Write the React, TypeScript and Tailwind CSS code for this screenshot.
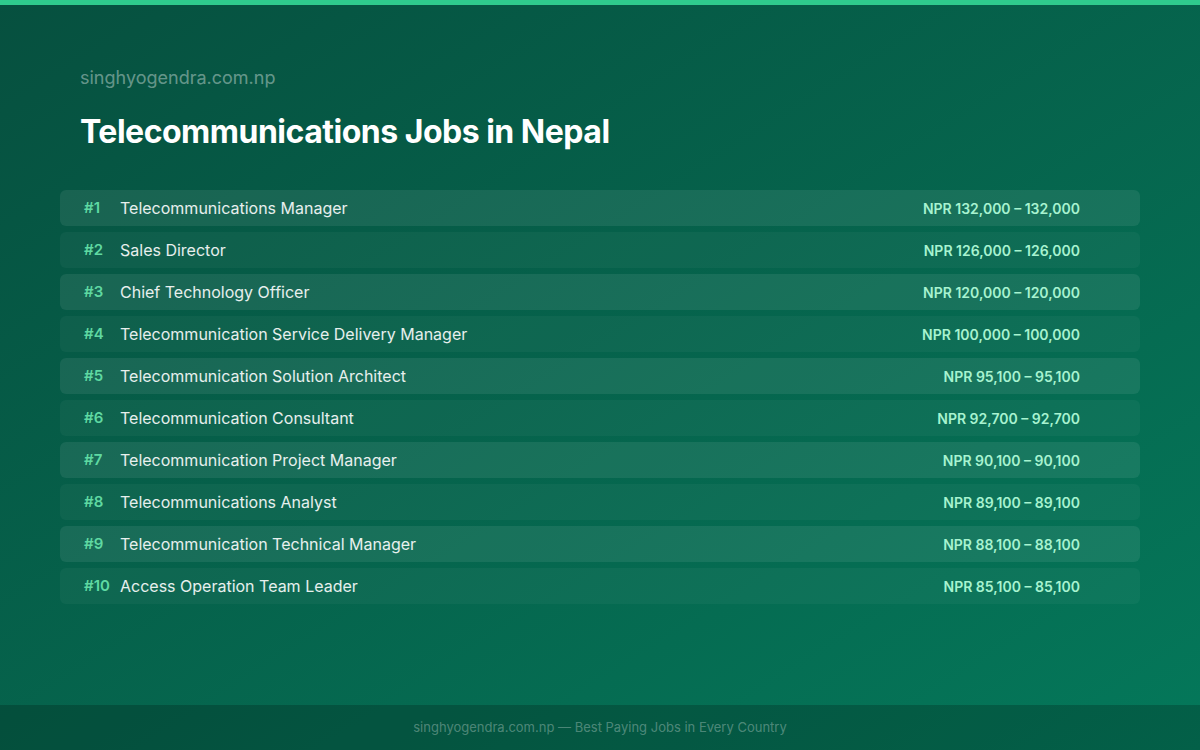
const jobs = [
  ['Telecommunications Manager', 'NPR 132,000 – 132,000'],
  ['Sales Director', 'NPR 126,000 – 126,000'],
  ['Chief Technology Officer', 'NPR 120,000 – 120,000'],
  ['Telecommunication Service Delivery Manager', 'NPR 100,000 – 100,000'],
  ['Telecommunication Solution Architect', 'NPR 95,100 – 95,100'],
  ['Telecommunication Consultant', 'NPR 92,700 – 92,700'],
  ['Telecommunication Project Manager', 'NPR 90,100 – 90,100'],
  ['Telecommunications Analyst', 'NPR 89,100 – 89,100'],
  ['Telecommunication Technical Manager', 'NPR 88,100 – 88,100'],
  ['Access Operation Team Leader', 'NPR 85,100 – 85,100'],
];

export default function App() {
  return (
    <div className="w-[1200px] h-[750px] flex flex-col bg-gradient-to-br from-[#06503f] to-[#04785a] [font-family:Inter,Roboto,sans-serif] overflow-hidden">
      <div className="h-[5px] bg-[#2fcb8d]" />
      <main className="flex-1 flex flex-col px-[60px]">
        <p className="mt-[61px] px-5 text-[18px] leading-[24px] text-white/40">singhyogendra.com.np</p>
        <h1 className="mt-[22px] px-5 text-[32px] leading-[40px] font-bold text-white tracking-[-0.5px]">Telecommunications Jobs in Nepal</h1>
        <div className="mt-[38px] flex flex-col gap-[6px]">
          {jobs.map(([name, pay], i) => (
            <div
              key={name}
              className={
                'h-[36px] rounded-md flex items-center pl-6 pr-[60px] ' +
                (i % 2 === 0 ? 'bg-white/[0.08]' : 'bg-white/[0.035]')
              }
            >
              <span className="w-9 text-[15px] font-semibold text-[#5fd9a2]">#{i + 1}</span>
              <span className="flex-1 text-[16px] text-white/90">{name}</span>
              <span className="text-[14px] font-semibold text-[#a7f3d0]">{pay}</span>
            </div>
          ))}
        </div>
      </main>
      <footer className="h-[45px] bg-black/20 flex items-center justify-center text-[13px] text-white/30">
        singhyogendra.com.np — Best Paying Jobs in Every Country
      </footer>
    </div>
  );
}
